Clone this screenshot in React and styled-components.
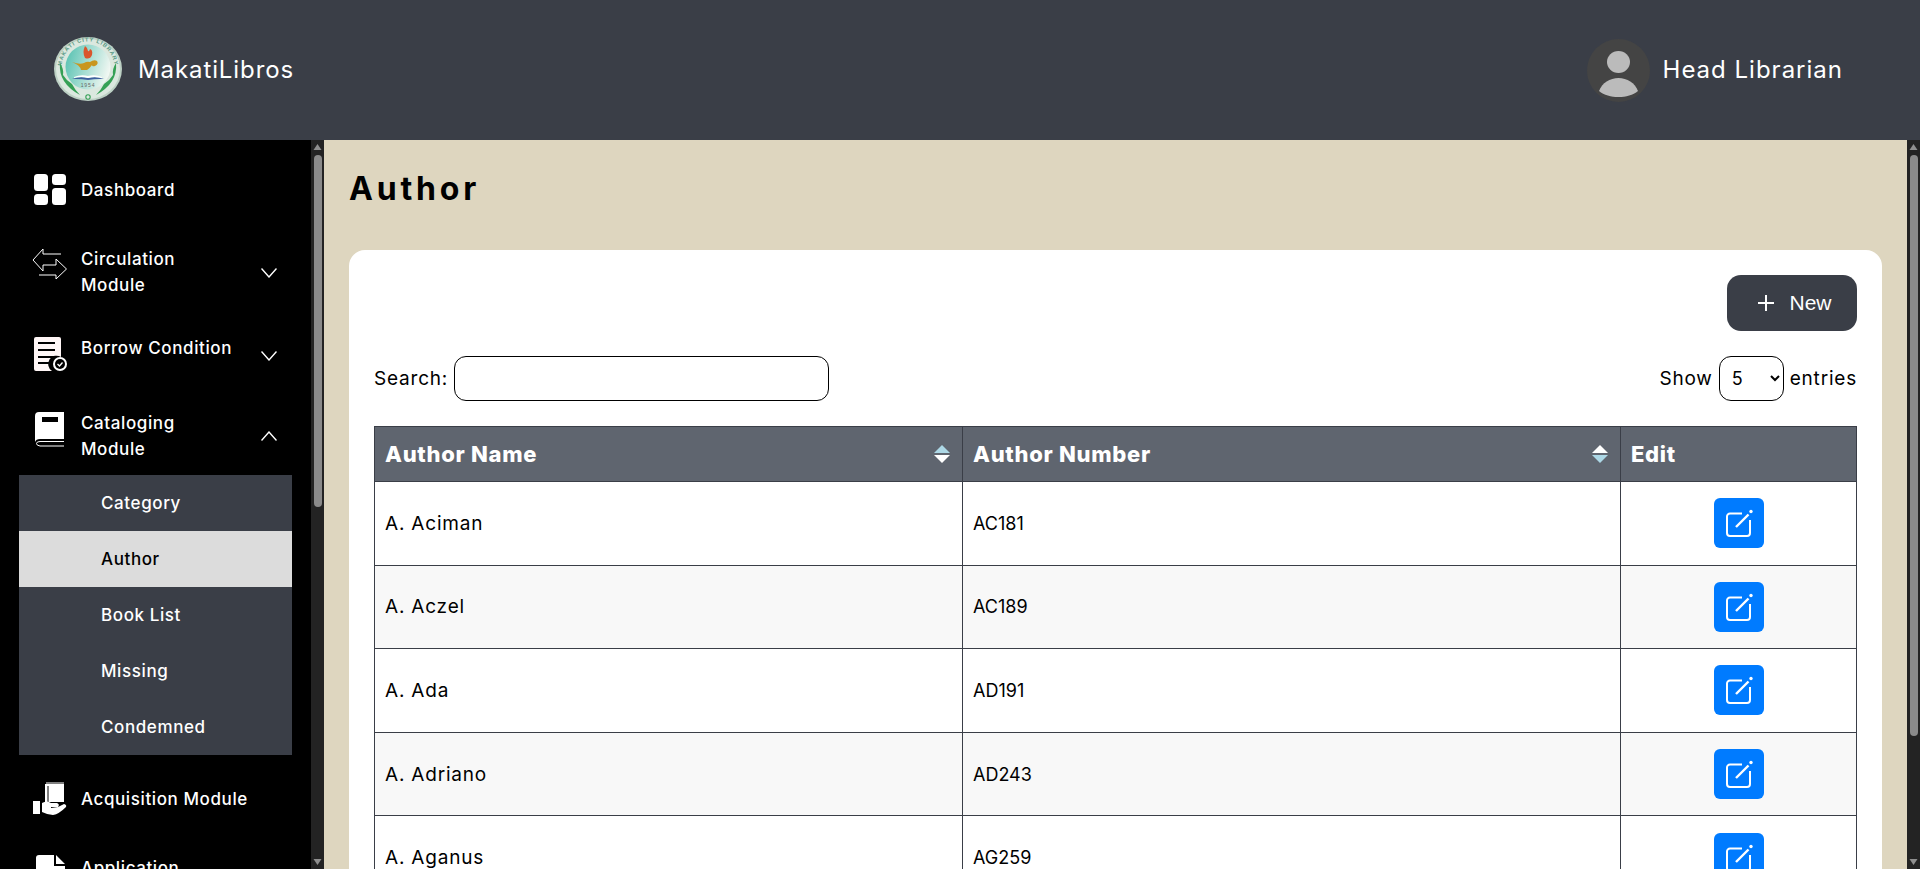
import styled, { createGlobalStyle } from "styled-components"

const GlobalStyle = createGlobalStyle`
  html, body {
    margin: 0;
    height: 100%;
    overflow: hidden;
  }
  * {
    box-sizing: border-box;
  }
  body {
    font-family: Inter, "Liberation Sans", sans-serif;
    color: #000;
  }
`

const Page = styled.div`
  height: 869px;
  display: flex;
  flex-direction: column;
  overflow: hidden;
`

const TopBar = styled.header`
  height: 140px;
  flex: none;
  background: #3a3e47;
  color: #fff;
  display: flex;
  align-items: center;
  justify-content: space-between;
  padding: 0 77px 0 54px;
`

const Brand = styled.div`
  display: flex;
  align-items: center;
  gap: 16px;
  font-size: 24px;
  letter-spacing: 0.9px;
`

const UserBox = styled.div`
  display: flex;
  align-items: center;
  gap: 13px;
  font-size: 24px;
  letter-spacing: 1px;
`

const BarText = styled.span`
  margin-bottom: 2px;
`

const LogoMark = styled.svg`
  width: 68px;
  height: 64px;
  margin-bottom: 3px;
`

const Body = styled.div`
  flex: 1;
  display: flex;
  min-height: 0;
`

const Sidebar = styled.aside`
  width: 324px;
  flex: none;
  display: flex;
  background: #000;
  color: #fff;
`

const Menu = styled.nav`
  flex: 1;
  min-width: 0;
  overflow: hidden;
  padding: 10px 19px 0;
`

const MenuRow = styled.div`
  height: 80px;
  margin-bottom: 2px;
  display: flex;
  align-items: center;
  gap: 14px;
  padding: 0 15px 0 14px;
  font-size: 17px;
  font-weight: 500;
  letter-spacing: 0.6px;
  line-height: 26px;
`

const MenuIcon = styled.svg`
  width: 34px;
  height: 36px;
  flex: none;
  fill: #fff;
  overflow: visible;
  margin-bottom: ${(p) => p.$lift * 2 || 0}px;
`

const MenuLabel = styled.span`
  flex: 1;
  white-space: nowrap;
  padding-bottom: ${(p) => (p.$raised ? "12px" : "0")};
`

const Chevron = styled.svg`
  width: 16px;
  height: 10px;
  flex: none;
  fill: none;
  stroke: #fff;
  stroke-width: 1.4;
  transform: ${(p) => (p.$open ? "rotate(180deg)" : "none")};
  margin-top: ${(p) => p.$nudge || 0}px;
`

const SubMenu = styled.div`
  margin: -3px 0 4px;
  background: #3a3e47;
`

const SubItem = styled.div`
  height: 56px;
  display: flex;
  align-items: center;
  padding-left: 82px;
  font-size: 17px;
  font-weight: 500;
  letter-spacing: 0.6px;
  background: ${(p) => (p.$active ? "#dcdcdc" : "transparent")};
  color: ${(p) => (p.$active ? "#000" : "#fff")};
`

/* the browser's own bars don't show up in the shot, so the dark bar is drawn */
const ScrollTrack = styled.div`
  width: 13px;
  flex: none;
  background: #232323;
  display: flex;
  flex-direction: column;
  align-items: center;
`

const ScrollArrow = styled.svg`
  width: 13px;
  height: 15px;
  flex: none;
  fill: #8f8f8f;
`

const ScrollRail = styled.div`
  flex: 1;
  width: 100%;
  padding: 0 2.5px;
`

const ScrollThumb = styled.div`
  height: ${(p) => p.$size}px;
  border-radius: 4px;
  background: #8a8a8a;
`

const MainPane = styled.div`
  flex: 1;
  min-width: 0;
  display: flex;
  background: #ded6bf;
`

const Main = styled.main`
  flex: 1;
  min-width: 0;
  overflow: hidden;
  padding: 25px;
`

const Title = styled.h1`
  margin: 0;
  height: 85px;
  padding-top: 2px;
  font-size: 32px;
  line-height: 44px;
  font-weight: 700;
  letter-spacing: 3.8px;
`

const Card = styled.section`
  background: #fff;
  border-radius: 16px;
  padding: 25px 25px 89px;
`

const ActionRow = styled.div`
  display: flex;
  justify-content: flex-end;
`

const NewButton = styled.button`
  width: 130px;
  height: 56px;
  border: 0;
  border-radius: 14px;
  background: #3a3e47;
  color: #fff;
  display: flex;
  align-items: center;
  justify-content: center;
  gap: 15px;
  padding: 0 0 0 6px;
  font-family: "Liberation Sans", sans-serif;
  font-size: 21px;
`

const PlusIcon = styled.svg`
  width: 16px;
  height: 16px;
  stroke: #fff;
  stroke-width: 2;
`

const FilterRow = styled.div`
  margin-top: 25px;
  height: 45px;
  display: flex;
  align-items: center;
  justify-content: space-between;
  font-size: 19px;
  letter-spacing: 0.8px;
`

const FilterLabel = styled.label`
  display: flex;
  align-items: center;
  gap: 6px;
`

const SearchInput = styled.input`
  width: 375px;
  height: 45px;
  border: 1px solid #000;
  border-radius: 12px;
  background: #fff;
  outline: none;
`

const EntriesSelect = styled.select`
  width: 65px;
  height: 45px;
  border: 1px solid #000;
  border-radius: 12px;
  background: #fff;
  padding-left: 8px;
  font-family: Inter, "Liberation Sans", sans-serif;
  font-size: 18px;
`

const Table = styled.table`
  margin-top: 25px;
  width: 100%;
  table-layout: fixed;
  border-collapse: collapse;
  font-size: 18px;
`

const HeadCell = styled.th`
  height: 55px;
  padding: 0 10px;
  background: #5f656f;
  border: 1px solid #3a3e47;
  color: #fff;
  text-align: left;
  font-size: 22px;
  font-weight: 800;
  letter-spacing: 0.7px;
`

const HeadInner = styled.div`
  display: flex;
  align-items: center;
  justify-content: space-between;
`

const SortIcon = styled.svg`
  width: 16px;
  height: 18px;
  margin-right: 2px;
`

const Row = styled.tr`
  height: 83.6px;
  background: ${(p) => (p.$striped ? "#f8f8f8" : "#fff")};
`

const Cell = styled.td`
  padding: 0 10px;
  border: 1px solid #3a3e47;
  text-align: ${(p) => (p.$center ? "center" : "left")};
  font-size: ${(p) => (p.$name ? "19px" : "18px")};
  letter-spacing: ${(p) => (p.$name ? "0.8px" : "0")};
`

const EditButton = styled.button`
  width: 50px;
  height: 50px;
  border: 0;
  border-radius: 6px;
  background: #007bff;
  padding: 0;
  display: inline-flex;
  align-items: center;
  justify-content: center;
  vertical-align: middle;
`

const ScrollBar = ({ thumb }) => (
  <ScrollTrack>
    <ScrollArrow viewBox="0 0 13 15">
      <path d="M2.5 10h8l-4-6z" />
    </ScrollArrow>
    <ScrollRail>
      <ScrollThumb $size={thumb} />
    </ScrollRail>
    <ScrollArrow viewBox="0 0 13 15">
      <path d="M2.5 5h8l-4 6z" />
    </ScrollArrow>
  </ScrollTrack>
)

const Logo = () => (
  <LogoMark viewBox="0 0 68 64">
    <defs>
      <linearGradient id="seal" x1="0" y1="0.2" x2="1" y2="0.5">
        <stop offset="0" stopColor="#58c2b2" />
        <stop offset="1" stopColor="#f0f7f2" />
      </linearGradient>
      <path id="ring" d="M11 44A26.500 26.500 0 1 1 57 44" />
    </defs>
    <ellipse cx="34" cy="32" rx="34" ry="32" fill="#bcd0c4" />
    <ellipse cx="34" cy="32" rx="32" ry="30" fill="#dbe8df" />
    <text fontFamily="Liberation Sans, sans-serif" fontSize="5.600" fontWeight="700" letterSpacing="0.9" fill="#5a9a86">
      <textPath href="#ring" startOffset="14%">MAKATI CITY LIBRARY</textPath>
    </text>
    <circle cx="34" cy="30" r="22.500" fill="url(#seal)" />
    <path d="M31 9q-3 6 0 12 5 2 7-3 1-5-2-6-1 3-2 2 0-3-3-5z" fill="#d9552c" />
    <path d="M18 25q8 3 12 1 3-2 6-1 4-3 7-1 2 3-2 5-3 1-3-1-2 3-5 5h-6q-1-5-9-8z" fill="#c9961f" />
    <path d="M18 42q8-3 16-1 8-2 16 1-8-.5-16 1-8-1.500-16-1z" fill="#3f5f9e" />
    <path d="M20 40q7-3 14-1 7-2 14 1v1q-7-2-14 0-7-2-14 0z" fill="#fff" />
    <text x="34" y="50" textAnchor="middle" fontFamily="Liberation Sans, sans-serif" fontSize="5" fill="#666">1954</text>
    <path d="M6 26q-2 20 20 32-5-5-8-11-6-4-9-9 1-6-3-12z" fill="#35a055" />
    <path d="M62 26q2 20-20 32 5-5 8-11 6-4 9-9-1-6 3-12z" fill="#35a055" />
    <circle cx="34" cy="60" r="2.200" fill="none" stroke="#35a055" strokeWidth="1.100" />
  </LogoMark>
)

const Avatar = () => (
  <svg width="63" height="63" viewBox="0 0 63 63">
    <circle cx="31.500" cy="31.500" r="31.500" fill="#444" />
    <ellipse cx="31.500" cy="23" rx="11.500" ry="11" fill="#bbb" />
    <path d="M12 52c3-8 11-13 19.500-13S48 44 51 52c-5 4-12 6-19.500 6S17 56 12 52z" fill="#bbb" />
  </svg>
)

const ChevronDown = (props) => (
  <Chevron viewBox="0 0 16 10" {...props}>
    <path d="M.5.5 8 9 15.500.5" />
  </Chevron>
)

const DashboardIcon = () => (
  <MenuIcon viewBox="0 0 34 36">
    <rect x="1" y="2" width="14" height="17" rx="3.500" />
    <rect x="19" y="2" width="14" height="11" rx="3.500" />
    <rect x="1" y="22" width="14" height="11" rx="3.500" />
    <rect x="19" y="16" width="14" height="17" rx="3.500" />
  </MenuIcon>
)

const ArrowsIcon = () => (
  <MenuIcon viewBox="33 249 34 36" $lift={5}>
    <path
      d="M61 254H43v-5l-10 11 10 11v-6h13v-6l10.500 10L56 279v-4H39"
      fill="none"
      stroke="#fff"
    />
  </MenuIcon>
)

const ConditionIcon = () => (
  <MenuIcon viewBox="0 0 34 36">
    <path d="M3 1h23a2 2 0 0 1 2 2v18a8 8 0 0 0-9 14H3a2 2 0 0 1-2-2V3a2 2 0 0 1 2-2z" fill="#fff6f6" />
    <path d="M5 7h17M5 14h17M5 21h17M5 27h12" stroke="#000" strokeWidth="2.200" />
    <circle cx="27" cy="28" r="7" />
    <circle cx="27" cy="28" r="5" fill="#000" />
    <path d="M24.500 28l2 2 3-3.500" stroke="#fff" strokeWidth="1.300" fill="none" />
  </MenuIcon>
)

const BookIcon = () => (
  <MenuIcon viewBox="0 0 34 36" $lift={7}>
    <path d="M6 1h25v27H7q-4 0-5 3V5q0-4 4-4z" />
    <path d="M9 6h16v5H9z" fill="#000" />
    <path d="M31 30.500H7q-3.500 0-3.500 2t3.500 2.500h24" fill="none" stroke="#fff" strokeWidth="1" />
  </MenuIcon>
)

const AcquisitionIcon = () => (
  <MenuIcon viewBox="0 0 34 36">
    <path d="M12 3h19v19H12z" />
    <path d="M13 2h18" stroke="#fff" strokeWidth="1" />
    <path d="M15 5v17" stroke="#000" strokeWidth="1" />
    <path d="M11 22h21" stroke="#000" strokeWidth="2" />
    <path d="M0 20h7v13H0z" />
    <path d="M9 22q5-3 9 0h6q3 1 1 4h-7v1l7-1 6-3q3 1 2 3-7 7-13 8-5 0-11-3z" />
  </MenuIcon>
)

const FileIcon = () => (
  <MenuIcon viewBox="0 0 34 36" $lift={8}>
    <path d="M6 0h15v11h11v22a3 3 0 0 1-3 3H6a3 3 0 0 1-3-3V3a3 3 0 0 1 3-3zM23 0l9 9h-9z" />
  </MenuIcon>
)

const Sort = ({ active }) => (
  <SortIcon viewBox="0 0 16 18">
    <path d="M8 0l8 8H0z" fill={active === "up" ? "#add8e6" : "#fff"} />
    <path d="M8 18l8-8H0z" fill={active === "down" ? "#add8e6" : "#fff"} />
  </SortIcon>
)

const EditIcon = () => (
  <svg width="28" height="28" viewBox="0 0 28 28" fill="none" stroke="#fff">
    <path d="M17 4.500H5a3 3 0 0 0-3 3V24a3 3 0 0 0 3 3h17a3 3 0 0 0 3-3V11" strokeWidth="2" />
    <path d="M11 18 23.500 5.500" strokeWidth="2.400" />
    <circle cx="26" cy="2.500" r="1.700" fill="#fff" stroke="none" />
  </svg>
)

const authors = [
  ["A. Aciman", "AC181"],
  ["A. Aczel", "AC189"],
  ["A. Ada", "AD191"],
  ["A. Adriano", "AD243"],
  ["A. Aganus", "AG259"],
]

const App = () => {
  return (
    <Page>
      <GlobalStyle />
      <TopBar>
        <Brand>
          <Logo />
          <BarText>MakatiLibros</BarText>
        </Brand>
        <UserBox>
          <Avatar />
          <BarText>Head Librarian</BarText>
        </UserBox>
      </TopBar>
      <Body>
        <Sidebar>
          <Menu>
            <MenuRow>
              <DashboardIcon />
              <MenuLabel>Dashboard</MenuLabel>
            </MenuRow>
            <MenuRow>
              <ArrowsIcon />
              <MenuLabel>
                Circulation
                <br />
                Module
              </MenuLabel>
              <ChevronDown $nudge={2} />
            </MenuRow>
            <MenuRow>
              <ConditionIcon />
              <MenuLabel $raised>Borrow Condition</MenuLabel>
              <ChevronDown $nudge={4} />
            </MenuRow>
            <MenuRow>
              <BookIcon />
              <MenuLabel>
                Cataloging
                <br />
                Module
              </MenuLabel>
              <ChevronDown $open />
            </MenuRow>
            <SubMenu>
              <SubItem>Category</SubItem>
              <SubItem $active>Author</SubItem>
              <SubItem>Book List</SubItem>
              <SubItem>Missing</SubItem>
              <SubItem>Condemned</SubItem>
            </SubMenu>
            <MenuRow>
              <AcquisitionIcon />
              <MenuLabel>Acquisition Module</MenuLabel>
            </MenuRow>
            <MenuRow>
              <FileIcon />
              <MenuLabel>
                Application
                <br />
                Module
              </MenuLabel>
              <ChevronDown />
            </MenuRow>
          </Menu>
          <ScrollBar thumb={352} />
        </Sidebar>
        <MainPane>
          <Main>
            <Title>Author</Title>
            <Card>
              <ActionRow>
                <NewButton>
                  <PlusIcon viewBox="0 0 16 16">
                    <path d="M8 0v16M0 8h16" />
                  </PlusIcon>
                  New
                </NewButton>
              </ActionRow>
              <FilterRow>
                <FilterLabel>
                  Search:
                  <SearchInput type="text" />
                </FilterLabel>
                <FilterLabel>
                  Show
                  <EntriesSelect defaultValue="5">
                    <option value="5">5</option>
                    <option value="10">10</option>
                    <option value="25">25</option>
                  </EntriesSelect>
                  entries
                </FilterLabel>
              </FilterRow>
              <Table>
                <colgroup>
                  <col style={{ width: "588px" }} />
                  <col style={{ width: "658px" }} />
                  <col />
                </colgroup>
                <thead>
                  <tr>
                    <HeadCell>
                      <HeadInner>
                        Author Name
                        <Sort active="up" />
                      </HeadInner>
                    </HeadCell>
                    <HeadCell>
                      <HeadInner>
                        Author Number
                        <Sort active="down" />
                      </HeadInner>
                    </HeadCell>
                    <HeadCell>Edit</HeadCell>
                  </tr>
                </thead>
                <tbody>
                  {authors.map(([name, number], i) => (
                    <Row key={number} $striped={i % 2 === 1}>
                      <Cell $name>{name}</Cell>
                      <Cell>{number}</Cell>
                      <Cell $center>
                        <EditButton>
                          <EditIcon />
                        </EditButton>
                      </Cell>
                    </Row>
                  ))}
                </tbody>
              </Table>
            </Card>
          </Main>
          <ScrollBar thumb={581} />
        </MainPane>
      </Body>
    </Page>
  )
}

export default App
